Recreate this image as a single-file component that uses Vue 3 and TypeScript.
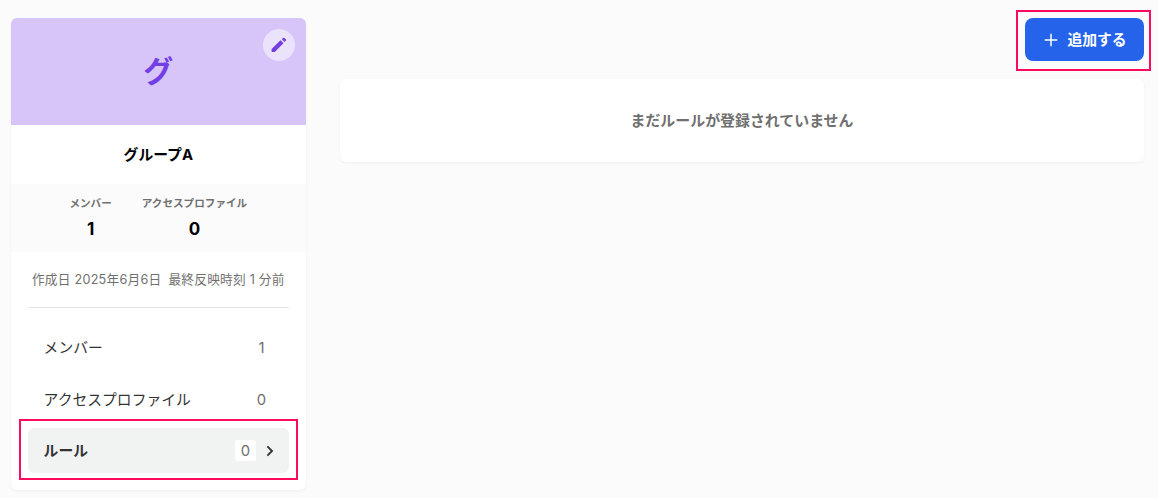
<script setup lang="ts">
interface Stat {
  label: string
  value: number
}

interface MenuItem {
  label: string
  count: number
  active?: boolean
}

const groupName = 'グループA'

const stats: Stat[] = [
  { label: 'メンバー', value: 1 },
  { label: 'アクセスプロファイル', value: 0 },
]

const menuItems: MenuItem[] = [
  { label: 'メンバー', count: 1 },
  { label: 'アクセスプロファイル', count: 0 },
  { label: 'ルール', count: 0, active: true },
]
</script>

<template>
  <div class="page">
    <aside class="group-card">
      <header class="group-card__cover">
        <span class="group-card__initial">{{ groupName.charAt(0) }}</span>
        <button class="edit-button" type="button" aria-label="編集">
          <svg width="16" height="16" viewBox="0 0 16 16" fill="currentColor">
            <path d="M.9 11.7 9.2 3.5a.5.5 0 0 1 .7 0l2.3 2.3a.5.5 0 0 1 0 .7L4 14.8a1 1 0 0 1-.7.3H1.1a.5.5 0 0 1-.5-.5v-2.2a1 1 0 0 1 .3-.7Z" />
            <path d="m11.1 2 1-1a1 1 0 0 1 1.4 0l1.3 1.3a1 1 0 0 1 0 1.4l-1 1a.4.4 0 0 1-.6 0L11.100 2.600a.4.4 0 0 1 0-.6Z" />
          </svg>
        </button>
      </header>
      <h1 class="group-card__name">{{ groupName }}</h1>
      <dl class="stats">
        <div v-for="stat in stats" :key="stat.label" class="stats__item">
          <dt>{{ stat.label }}</dt>
          <dd>{{ stat.value }}</dd>
        </div>
      </dl>
      <p class="group-card__dates">
        <span>作成日 2025年6月6日</span>
        <span>最終反映時刻 1 分前</span>
      </p>
      <nav class="menu">
        <a
          v-for="item in menuItems"
          :key="item.label"
          class="menu__item"
          :class="{ 'menu__item--active': item.active }"
        >
          <span class="menu__label">{{ item.label }}</span>
          <span class="menu__count">{{ item.count }}</span>
          <svg v-if="item.active" class="menu__chevron" width="8" height="12" viewBox="0 0 8 12">
            <path d="M1.4 1.4 6 6l-4.6 4.6" fill="none" stroke="currentColor" stroke-width="1.9" />
          </svg>
        </a>
      </nav>
    </aside>

    <main class="content">
      <button class="add-button" type="button">
        <svg width="14" height="14" viewBox="0 0 14 14">
          <path d="M7 .7v12.6M.7 7h12.6" stroke="currentColor" stroke-width="1.5" />
        </svg>
        <span>追加する</span>
      </button>
      <section class="empty">まだルールが登録されていません</section>
    </main>
  </div>
</template>

<style>
body {
  background: #fff;
}
</style>

<style scoped>
.page {
  display: flex;
  gap: 34px;
  box-sizing: border-box;
  width: 1158px;
  height: 498px;
  padding: 18px 14px 0 10.6px;
  background: #fbfbfb;
  color: #000;
  font-family: Inter, "Noto Sans CJK JP", sans-serif;
}

.page button {
  border: 0;
  font-family: inherit;
}

.group-card {
  flex: none;
  width: 295.4px;
  height: 472px;
  border-radius: 6px;
  background: #fff;
  box-shadow: 0 1px 3px rgba(0, 0, 0, 0.05);
}

.group-card__cover {
  position: relative;
  display: flex;
  align-items: center;
  justify-content: center;
  box-sizing: border-box;
  height: 107px;
  padding-bottom: 2px;
  border-radius: 6px 6px 0 0;
  background: #d7c5f9;
  color: #733ee4;
}

.group-card__initial {
  font-size: 30px;
  font-weight: 700;
  line-height: 1;
}

.edit-button {
  position: absolute;
  top: 11px;
  right: 11px;
  display: grid;
  place-items: center;
  width: 32px;
  height: 32px;
  padding: 0;
  border-radius: 50%;
  background: #ebe2fc;
  color: #733ee4;
}

.group-card__name {
  box-sizing: border-box;
  height: 59px;
  margin: 0;
  padding-top: 1px;
  font-size: 14.8px;
  font-weight: 700;
  line-height: 59px;
  text-align: center;
}

.stats {
  display: flex;
  justify-content: center;
  gap: 30px;
  box-sizing: border-box;
  height: 68px;
  margin: 0;
  padding-top: 10px;
  background: #fbfbfb;
  text-align: center;
}

.stats dt {
  color: #707070;
  font-size: 10.6px;
  font-weight: 700;
  line-height: 20px;
}

.stats dd {
  margin: 3px 0 0;
  font-size: 17px;
  font-weight: 700;
  line-height: 24px;
}

.group-card__dates {
  display: flex;
  justify-content: center;
  gap: 7px;
  height: 55px;
  margin: 0 17px;
  border-bottom: 1px solid #e5e5e5;
  color: #707070;
  font-size: 12.7px;
  letter-spacing: 0.22px;
  line-height: 55px;
  white-space: nowrap;
}

.menu {
  display: flex;
  flex-direction: column;
  gap: 6.5px;
  padding: 17px 17px 0;
}

.menu__item {
  position: relative;
  display: flex;
  align-items: center;
  box-sizing: border-box;
  height: 45px;
  padding: 0 17px 0 16px;
  border-radius: 6px;
  color: #333;
  font-size: 14.8px;
}

.menu__item--active {
  padding-right: 15px;
  background: #f1f3f2;
  font-weight: 700;
}

.menu__item--active::after {
  content: "";
  position: absolute;
  inset: -9px -9px -7px;
  border: 2px solid #fb0a5e;
}

.menu__label {
  flex: 1;
  padding-bottom: 2px;
}

.menu__count {
  box-sizing: border-box;
  width: 21px;
  height: 21px;
  padding-top: 1px;
  border-radius: 3px;
  color: #707070;
  font-weight: 400;
  line-height: 21px;
  text-align: center;
}

.menu__item--active .menu__count {
  background: #fff;
}

.menu__chevron {
  margin-left: 10px;
}

.content {
  display: flex;
  flex: 1;
  flex-direction: column;
  gap: 18px;
}

.add-button {
  position: relative;
  display: flex;
  align-items: center;
  align-self: flex-end;
  justify-content: center;
  gap: 9px;
  width: 119px;
  height: 43px;
  padding: 0 0 0 2px;
  border-radius: 8px;
  background: #2563eb;
  color: #fff;
  font-size: 14.8px;
  font-weight: 700;
}

.add-button span {
  padding-bottom: 2px;
}

.add-button::after {
  content: "";
  position: absolute;
  inset: -8px -7px -10px -9px;
  border: 2px solid #fb0a5e;
}

.empty {
  box-sizing: border-box;
  height: 83px;
  padding-top: 1px;
  border-radius: 6px;
  background: #fff;
  box-shadow: 0 1px 3px rgba(0, 0, 0, 0.05);
  color: #707070;
  font-size: 14.93px;
  font-weight: 700;
  line-height: 83px;
  text-align: center;
}
</style>
